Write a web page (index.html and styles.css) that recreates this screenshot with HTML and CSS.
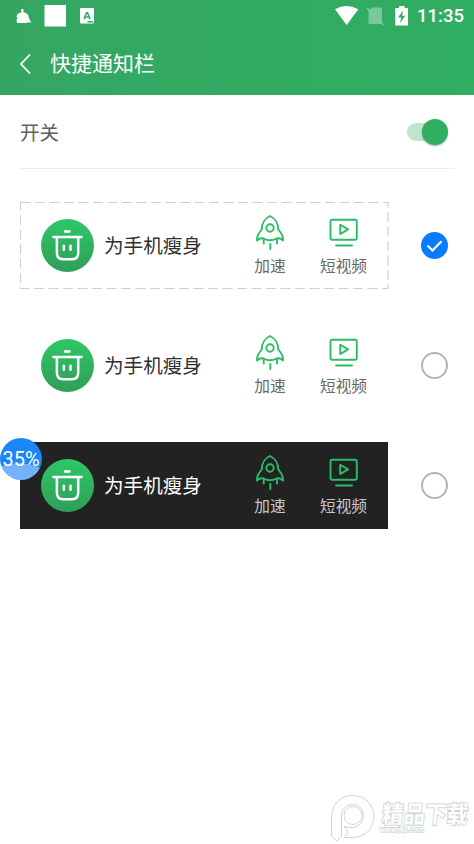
FILE: index.html
```html
<!DOCTYPE html>
<html lang="zh-CN">
<head>
<meta charset="utf-8">
<title>快捷通知栏</title>
<link rel="stylesheet" href="styles.css">
</head>
<body>
<svg class="defs" width="0" height="0">
  <defs>
    <symbol id="trash" viewBox="0 0 53 53">
      <g fill="none" stroke="#fff" stroke-width="2.500" stroke-linecap="round" stroke-linejoin="round">
        <path d="M24 12.500h4.500M12.500 18h28M15.900 18V33.800q0 6.500 6.500 6.500h8.300q6.500 0 6.500-6.500V18M22.800 26.800v4M29.500 26.800v4"/>
      </g>
    </symbol>
    <symbol id="rocket" viewBox="0 0 30 36">
      <g fill="none" stroke="currentColor" stroke-width="1.900" stroke-linecap="round" stroke-linejoin="round">
        <path d="M15 2C10.500 4 6.800 9 6.700 15.500C4.500 18.500 1.500 21 2 26.500C4.500 24 6.500 24 8.500 24.500Q15 28 21.500 24.500C23.500 24 25.500 24 28 26.500C28.500 21 25.500 18.500 23.300 15.500C23.200 9 19.500 4 15 2Z"/>
        <circle cx="15" cy="14" r="3.700"/>
        <path d="M8.700 25.500v4M15.300 30v5M22 25.500v4"/>
      </g>
    </symbol>
    <symbol id="video" viewBox="0 0 30 36">
      <g fill="none" stroke="currentColor" stroke-width="1.900" stroke-linecap="round" stroke-linejoin="round">
        <rect x="1.500" y="5.700" width="26.300" height="20" rx="1.500"/>
        <path d="M11.200 10.700v9.400l7.800-4.700zM7 31.500h16"/>
      </g>
    </symbol>
  </defs>
</svg>

<header class="header">
  <div class="status">
    <svg class="status-left" width="80" height="32" viewBox="0 0 80 32">
      <path fill="#fff" d="M5.300 9h2.200v3.500q4 .3 5 3.500l.3 1.500q1 3.500 2.700 5h-4l-.7-.8v1.300H1.200q-1.300-3 .3-5.300l-.9-.7q0-4 4.700-4.500z"/>
      <rect x="28.500" y="5" width="21.500" height="21.500" fill="#fff"/>
      <rect x="64" y="8" width="14" height="15.500" rx="1" fill="#fff"/>
      <path d="M68 19.200l2.500-6.500h1l2.500 6.500M69 17h4M71.500 21.700h5.500" fill="none" stroke="#32a862" stroke-width="1.600"/>
    </svg>
    <svg class="status-right" width="76" height="32" viewBox="0 0 76 32">
      <path fill="#fff" d="M0 9.300Q11.500 2.500 23.300 9.300L11.700 25z"/>
      <path fill="#fff" fill-opacity=".35" d="M37 7.500h10v16.500H33.500V11z"/>
      <path d="M32 8l16.500 17" stroke="#87cda2" stroke-width="1.300"/>
      <path fill="#fff" d="M64 6h5.500v2H73v17.500H60.300V8H64z"/>
      <path fill="#30ab61" d="M68 10.500l-5 7h3.200l-1.200 5.500 5.300-7.200h-3.200z"/>
    </svg>
    <span class="clock">11:35</span>
  </div>
  <div class="titlebar">
    <svg class="back" width="14" height="22" viewBox="0 0 14 22"><path d="M11 1.500L2 11l9 9.500" fill="none" stroke="#fff" stroke-width="1.800"/></svg>
    <h1 class="title">快捷通知栏</h1>
  </div>
</header>

<main class="content">
  <div class="switch-row">
    <span>开关</span>
    <span class="switch"><span class="knob"></span></span>
  </div>

  <div class="option">
    <section class="card">
      <svg class="outline" width="369" height="88"><rect x=".5" y=".5" width="367.500" height="86"/></svg>
      <svg class="logo"><use href="#trash"/></svg>
      <span class="name">为手机瘦身</span>
      <div class="action boost"><svg><use href="#rocket"/></svg><span>加速</span></div>
      <div class="action clip"><svg><use href="#video"/></svg><span>短视频</span></div>
    </section>
    <span class="radio checked"><svg width="27" height="27" viewBox="0 0 27 27"><path d="M6.500 13.500l5 5 9-9.300" fill="none" stroke="#fff" stroke-width="2.200"/></svg></span>
  </div>

  <div class="option">
    <section class="card">
      <svg class="logo"><use href="#trash"/></svg>
      <span class="name">为手机瘦身</span>
      <div class="action boost"><svg><use href="#rocket"/></svg><span>加速</span></div>
      <div class="action clip"><svg><use href="#video"/></svg><span>短视频</span></div>
    </section>
    <span class="radio"></span>
  </div>

  <div class="option">
    <section class="card dark">
      <svg class="logo"><use href="#trash"/></svg>
      <span class="name">为手机瘦身</span>
      <div class="action boost"><svg><use href="#rocket"/></svg><span>加速</span></div>
      <div class="action clip"><svg><use href="#video"/></svg><span>短视频</span></div>
    </section>
    <span class="radio"></span>
    <span class="percent">35%</span>
  </div>
</main>

<svg class="watermark" width="146" height="50" viewBox="0 0 146 50">
  <g fill="#fff" stroke="#d2d2d2" stroke-width="1">
    <path d="M3.500 42V22C5 8 14 1.500 24.500 1.500C37 1.500 46 10.500 46 22C46 35 36 43.500 25 43.500H16.500L20 38.500L16.500 33V32.500Q20 34 25 33.500C31 32.500 35.500 28 35.500 21.500C35.500 15 30.500 10.500 24.500 10.500C18 10.500 13.500 15.500 13.500 22V42L9 47Z"/>
    <circle cx="25" cy="21.500" r="9"/>
  </g>
  <text class="mark-name" x="54" y="29" textLength="86" lengthAdjust="spacingAndGlyphs" transform="translate(2 0) skewX(-5)">精品下载</text>
  <text class="mark-url" x="52" y="38" textLength="44" lengthAdjust="spacingAndGlyphs">www.j8p.com</text>
</svg>
</body>
</html>
```
FILE: styles.css
```css
* {
  box-sizing: border-box;
}

body {
  margin: 0;
  width: 474px;
  height: 844px;
  overflow: hidden;
  background: #fff;
  font-family: Roboto, "Noto Sans CJK SC", sans-serif;
}

svg {
  display: block;
  flex: none;
}

.defs {
  position: absolute;
}

.header {
  height: 95px;
  background: linear-gradient(90deg, #35a662, #30ae62);
  color: #fff;
}

.status {
  display: flex;
  height: 32px;
  padding: 0 10px 0 16px;
}

.status-right {
  margin-left: auto;
}

.clock {
  width: 47px;
  margin-left: 6px;
  font-size: 18.500px;
  font-weight: 500;
  line-height: 33px;
  white-space: nowrap;
}

.titlebar {
  display: flex;
  align-items: center;
  height: 63px;
  padding-left: 19px;
}

.title {
  margin: 0 0 0 17px;
  font-size: 21px;
  font-weight: 400;
  line-height: 30px;
}

.content {
  padding: 0 20px;
}

.switch-row {
  display: flex;
  align-items: center;
  justify-content: space-between;
  height: 74px;
  margin-bottom: 33px;
  border-bottom: 1px solid #ececec;
  color: #606060;
  font-size: 19.500px;
}

.switch {
  display: flex;
  align-items: center;
  justify-content: flex-end;
  width: 40px;
  height: 18px;
  margin-right: 7px;
  border-radius: 9px;
  background: #bde6cc;
}

.knob {
  flex: none;
  width: 26px;
  height: 26px;
  margin-right: -1px;
  border-radius: 50%;
  background: #30ae62;
  box-shadow: 0 1px 2px rgba(0, 0, 0, .3);
}

.option {
  position: relative;
  display: flex;
  align-items: center;
  height: 87px;
  margin-bottom: 33px;
}

.card {
  position: relative;
  display: flex;
  align-items: center;
  width: 368px;
  height: 87px;
  padding-left: 21px;
  color: #303030;
}

.card.dark {
  background: #222;
  color: #fff;
}

.outline {
  position: absolute;
  top: 0;
  left: 0;
}

.outline rect {
  fill: none;
  stroke: #cfcfcf;
  stroke-width: 1.200;
  stroke-dasharray: 10 4.500;
}

.logo {
  width: 53px;
  height: 53px;
  border-radius: 50%;
  background: linear-gradient(#2fc768, #309e59);
}

.name {
  width: 112px;
  margin-left: 10px;
  padding-bottom: 2px;
  font-size: 19.600px;
  white-space: nowrap;
}

.action {
  display: flex;
  flex-direction: column;
  align-items: center;
  width: 60px;
  height: 87px;
  padding-top: 12px;
  color: #686868;
  font-size: 15.700px;
  line-height: 24px;
}

.boost {
  margin-left: 24px;
}

.clip {
  margin-left: 13.500px;
}

.action svg {
  width: 30px;
  height: 36px;
  margin-bottom: 5px;
  color: #2bbd65;
}

.dark .action {
  color: #c8c8c8;
}

.radio {
  width: 27px;
  height: 27px;
  margin-left: 33px;
  border: 2px solid #b4b4b4;
  border-radius: 50%;
}

.radio.checked {
  border: 0;
  background: #087cff;
}

.percent {
  position: absolute;
  top: -4px;
  left: -20px;
  width: 42px;
  height: 42px;
  border-radius: 50%;
  background: radial-gradient(ellipse 30px 16px at 45% 98%, #72b2fa 98%, transparent 100%), #1b87f5;
  color: #fff;
  font-size: 20px;
  line-height: 42px;
  text-align: center;
}

.watermark {
  position: absolute;
  left: 328px;
  top: 794px;
  overflow: visible;
}

.mark-name {
  fill: #fff;
  stroke: #d0d0d0;
  stroke-width: 1.800px;
  paint-order: stroke;
  font-family: "Noto Sans CJK SC", sans-serif;
  font-size: 24px;
  font-weight: 700;
}

.mark-url {
  fill: #fff;
  stroke: #d0d0d0;
  stroke-width: 1.300px;
  paint-order: stroke;
  font-size: 8px;
  font-weight: 700;
}
```
